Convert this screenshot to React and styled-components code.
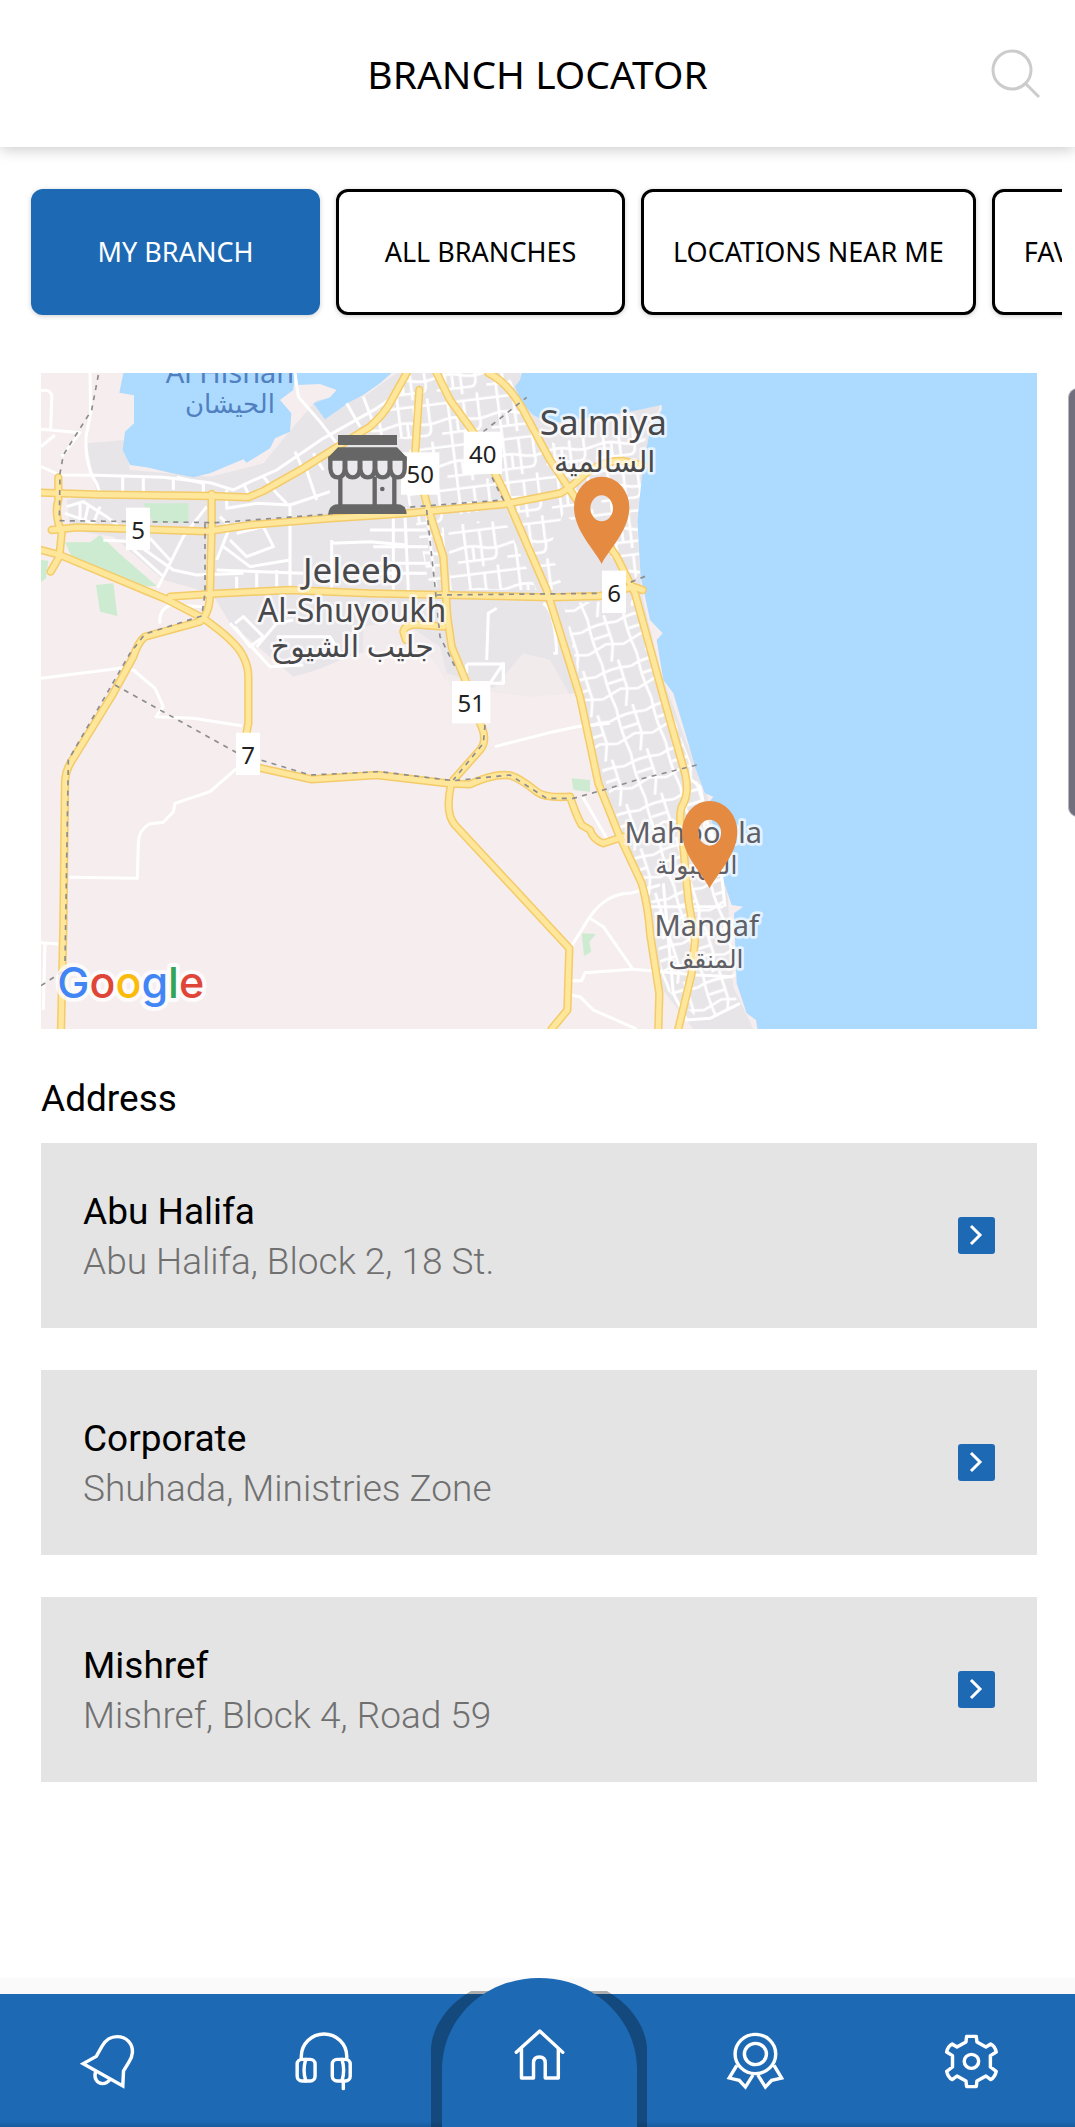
import React from "react";
import styled, { createGlobalStyle } from "styled-components";

const GlobalStyle = createGlobalStyle`
  * { box-sizing: border-box; }
  body {
    margin: 0;
    background: #fff;
    font-family: Roboto, sans-serif;
    color: #000;
  }
`;

const Page = styled.div`
  display: flex;
  flex-direction: column;
  min-height: 100vh;
  overflow: hidden;
  position: relative;
`;

const Header = styled.header`
  display: grid;
  grid-template-columns: 84px 1fr 84px;
  align-items: center;
  height: 147px;
  box-shadow: 0 2px 14px rgba(0, 0, 0, 0.22);
`;

const Title = styled.h1`
  grid-column: 2;
  margin: 0;
  font: 400 39px/60px "Noto Sans", sans-serif;
  text-align: center;
`;

const SearchButton = styled.button`
  justify-self: start;
  width: 50px;
  height: 50px;
  padding: 0;
  border: 0;
  background: none;
`;

const Tabs = styled.div`
  display: flex;
  gap: 16px;
  margin-right: 13px;
  padding: 42px 0 42px 31px;
  overflow: hidden;
`;

const Tab = styled.button`
  flex: none;
  min-width: 289px;
  height: 126px;
  padding: 0 29px;
  border: 3px solid ${(p) => (p.$active ? "#1d69b4" : "#000")};
  border-radius: 12px;
  background: ${(p) => (p.$active ? "#1d69b4" : "#fff")};
  color: ${(p) => (p.$active ? "#fff" : "#000")};
  font: 400 27px/36px "Noto Sans", sans-serif;
  box-shadow: 0 1px 5px rgba(0, 0, 0, 0.2);
`;

const Content = styled.main`
  padding: 16px 38px 48px 41px;
`;

const MapSvg = styled.svg`
  display: block;
  width: 100%;
  height: auto;
  background: #f6eeee;
`;

const SectionTitle = styled.h2`
  margin: 43px 0 18px;
  font-size: 37px;
  line-height: 53px;
  font-weight: 400;
`;

const List = styled.ul`
  display: flex;
  flex-direction: column;
  gap: 42px;
  margin: 0;
  padding: 0;
  list-style: none;
`;

const Card = styled.li`
  display: flex;
  align-items: center;
  justify-content: space-between;
  height: 185px;
  padding: 0 42px;
  background: #e4e4e4;
`;

const Details = styled.div`
  padding-top: 3px;
`;

const Name = styled.div`
  font-size: 37px;
  line-height: 50px;
`;

const Street = styled.div`
  font-size: 37px;
  line-height: 50px;
  font-weight: 300;
  color: #707070;
`;

const OpenButton = styled.button`
  display: grid;
  place-items: center;
  width: 37px;
  height: 37px;
  padding: 0;
  border: 0;
  border-radius: 3px;
  background: #1d69b4;
`;

const Nav = styled.nav`
  display: grid;
  grid-template-columns: repeat(5, 1fr);
  height: 149px;
  margin-top: auto;
  border-top: 16px solid #fafafa;
  background: linear-gradient(#1d69b4 127px, #185c9f 133px);
`;

const NavLink = styled.a`
  position: relative;
  display: grid;
  place-items: center;
  padding-bottom: 2px;
`;

const Bump = styled.svg`
  position: absolute;
  bottom: 0;
  left: 50%;
  margin-left: -107px;
`;

const NavIcon = styled.svg`
  position: relative;
  fill: none;
  stroke: #fff;
  stroke-width: 10;
`;

const ScrollThumb = styled.div`
  position: absolute;
  top: 388px;
  right: -12px;
  width: 19px;
  height: 429px;
  border: 1px solid #b5b3bb;
  border-radius: 12px;
  background: #716e7d;
`;

const branches = [
  { name: "Abu Halifa", street: "Abu Halifa, Block 2, 18 St." },
  { name: "Corporate", street: "Shuhada, Ministries Zone" },
  { name: "Mishref", street: "Mishref, Block 4, Road 59" },
];

const tabs = ["MY BRANCH", "ALL BRANCHES", "LOCATIONS NEAR ME", "FAVOURITE BRANCHES"];

const majorRoads = [
  "M33 398L215 404L545 408L655 412L700 393L820 325L920 262L1020 200Q1065 160 1085 120L1130 39",
  "M65 510L140 502L340 508L530 514L660 495L900 475L1130 460L1230 450L1420 433L1590 400Q1620 385 1650 355Q1710 300 1780 303L1840 316",
  "M85 352V420Q72 460 95 520L88 590L62 635",
  "M33 570L90 585L330 685L410 718L520 775Q620 845 640 890Q655 920 655 950V1090L642 1160Q650 1215 690 1224L845 1258L1040 1245L1260 1271L1320 1273Q1390 1240 1440 1246Q1470 1255 1520 1295Q1545 1315 1620 1310Q1640 1370 1655 1395L1680 1410Q1690 1440 1720 1450L1780 1430",
  "M545 402V500L540 700Q540 760 510 785L345 830Q325 845 310 890L250 1000L130 1195Q105 1230 105 1270L100 1700L93 2007",
  "M420 710L570 700L780 690L1020 700L1560 712L1710 708L1810 680L1838 690",
  "M1168 90L1155 290L1190 430L1240 590L1252 770L1265 860L1310 970L1350 1089Q1375 1140 1350 1170L1270 1260",
  "M1262 1280Q1245 1360 1275 1395L1618 1765L1612 1950L1565 2007",
  "M1220 39L1260 120L1340 230L1420 390L1550 690L1650 1010L1705 1270L1765 1420L1835 1570Q1855 1640 1860 1720L1888 1900L1885 2007",
  "M1375 39Q1440 70 1490 170L1560 300L1640 420L1760 590L1815 700L1870 900L1900 1010L1965 1240Q1980 1300 1955 1340Q1945 1370 1958 1440L1975 1620L1995 1740L1985 1840L1945 2007",
  "M1240 800L1180 795Q1125 790 1120 815L1128 840",
];

const minorRoads = [
  "M180 39L182 160L168 230Q165 320 200 370L210 400",
  "M33 92Q70 85 65 120L62 208M33 208L150 218L95 290",
  "M33 260L75 225M33 320L90 345L200 346L400 352L540 368L610 390L650 370L740 330L880 235L1040 145L1120 90",
  "M795 39L805 110L870 185L920 250",
  "M278 352V400M340 352V395M430 352V390M440 352L520 370V400M640 370L660 412M795 275L815 320",
  "M110 440L160 425L230 470L280 510M150 430V475M175 435L165 480M105 460L190 490L210 440",
  "M220 540L310 545L430 630L500 645L640 640M300 560L400 650L385 680L460 530L530 440M360 535L420 600",
  "M590 390V445L680 430L780 435L900 395M570 470L600 500L560 600M620 520L700 500L730 560L650 590L600 540M580 560L660 620L780 600M560 630L820 640M780 430V690M905 540V690M905 550L1020 545L1130 555M620 650V690M680 640V690M740 630V680",
  "M390 790Q385 750 420 735L520 740M615 790L640 770L700 830L660 860L615 800M600 790L720 920L820 915M740 830H900L930 880M680 860L740 790L790 780",
  "M1090 470V690M1125 470L1135 690M1020 510H1190M1030 560H1195M1030 610H1200M1030 640H1190",
  "M33 955L270 925L310 930L375 985L400 1040L378 1070L490 1075L635 1097",
  "M620 1225L540 1295L435 1330L430 1355L400 1387L358 1392Q325 1410 325 1450L322 1555L118 1552",
  "M33 1748L85 1752M45 1752L40 1950",
  "M1395 1160L1550 1120L1640 1100L1740 1090",
  "M1658 1310L1730 1435M1620 1765L1680 1670Q1730 1600 1800 1600L1890 1575",
  "M1680 1675L1720 1700L1810 1830M1620 1862H1655L1665 1838L1810 1828L2000 1845L2110 1850",
  "M1620 1905L1650 1910L1690 1950L1820 2007",
  "M1540 730Q1575 750 1580 880H1570M1380 970L1420 910V970M1370 900L1375 760L1400 745",
  "M1310 912H1420V970H1380M1310 912V940",
  "M1960 1240L2010 1280L2035 1400L2070 1500L2085 1640M1860 1640L2080 1640M1900 1570L1930 1900L1970 1980L2040 1975L2130 1930",
  "M700 350L740 400L770 430M850 280L880 330M830 330L860 420M950 130L990 200M1000 110L1030 190",
];

const rails = [
  "M205 45L185 150L100 285L90 340L88 482L340 485L560 488L900 462L1130 442L1420 420L1380 340",
  "M1360 215L1490 112",
  "M525 490V700L515 768L345 822L300 880L225 1010L115 1200L105 1810",
  "M255 975L620 1178L840 1245L1050 1235L1270 1262L1440 1245L1550 1315L1630 1315L1720 1290L1820 1260L2000 1215",
  "M1190 450L1215 680L1230 830L1280 930",
  "M1220 705L1720 700L1855 645",
  "M1365 1095L1360 1150L1270 1260",
  "M33 1877L105 1830",
];

const places = [
  { text: "Al Hishan", x: 600, y: 68, size: 87, color: "#5080bf", halo: "none" },
  { text: "الحيشان", x: 600, y: 158, size: 78, color: "#5080bf", halo: "none" },
  { text: "Salmiya", x: 1720, y: 225, size: 105 },
  { text: "السالمية", x: 1724, y: 335, size: 87 },
  { text: "Jeleeb", x: 968, y: 668, size: 105 },
  { text: "Al-Shuyoukh", x: 966, y: 787, size: 96 },
  { text: "جليب الشيوخ", x: 967, y: 892, size: 90 },
  { text: "Mahboula", x: 1990, y: 1448, size: 87, color: "#5f5f66" },
  { text: "المهبولة", x: 1999, y: 1543, size: 75, color: "#5f5f66" },
  { text: "Mangaf", x: 2030, y: 1728, size: 87, color: "#5f5f66" },
  { text: "المنقف", x: 2028, y: 1823, size: 75, color: "#5f5f66" },
];

const shields = [
  { text: "5", x: 288, y: 443, w: 72 },
  { text: "50", x: 1113, y: 277, w: 115 },
  { text: "40", x: 1301, y: 215, w: 115 },
  { text: "6", x: 1716, y: 632, w: 72 },
  { text: "51", x: 1266, y: 963, w: 115 },
  { text: "7", x: 618, y: 1118, w: 72 },
];

const PlaceText = styled.text`
  font-family: "Noto Sans", "DejaVu Sans", sans-serif;
  text-anchor: middle;
  fill: ${(p) => p.$color || "#48484a"};
  stroke: ${(p) => p.$halo || "rgba(255, 255, 255, 0.7)"};
  stroke-width: 16;
  stroke-linejoin: round;
  paint-order: stroke;
`;

const ShieldText = styled.text`
  font: 72px "Noto Sans", sans-serif;
  text-anchor: middle;
  fill: #222;
`;

const LogoText = styled.text`
  font: 500 129px Inter, sans-serif;
  stroke: rgba(255, 255, 255, 0.75);
  stroke-width: 24;
  stroke-linejoin: round;
  paint-order: stroke;
`;

const Pin = ({ x, y }) => (
  <path
    transform={`translate(${x} ${y})`}
    fill="#e58a41"
    fillRule="evenodd"
    d="M0 0C-20 -42 -83 -100 -83 -170A83 92 0 0 1 83 -170C83 -100 20 -42 0 0ZM-34 -167A34 39 0 0 0 34 -167A34 39 0 0 0 -34 -167Z"
  />
);

const Store = () => (
  <g fill="#666">
    <path d="M1034 350H1093V440H1034Z" fill="#e4e2e6" />
    <path d="M924 225H1101V255H924ZM924 262H1101L1130 292V302H895V292Z" />
    <g fill="#ebe9ed" stroke="#666" strokeWidth="13">
      {[901, 946, 991, 1036, 1081].map((x) => (
        <path key={x} d={`M${x} 296V325Q${x + 2} 352 ${x + 22} 352Q${x + 43} 352 ${x + 43} 325V296Z`} />
      ))}
      <path fill="none" d="M931 350V440M1034 350V440M1093 350V440" />
    </g>
    <circle cx="1057" cy="387" r="7" />
    <path d="M895 462Q897 433 925 433H1102Q1128 433 1130 462Z" />
  </g>
);

const BranchMap = () => (
  <MapSvg viewBox="33 39 2988 1968" role="img" aria-label="Map of branches">
    <defs>
      <pattern id="blocks" width="150" height="130" patternUnits="userSpaceOnUse" patternTransform="rotate(-7)">
        <path
          d="M0 20H150M0 72Q40 60 75 72T150 72M0 110H95M28 0V130M75 20V130M118 0V72M95 110Q125 115 118 72M50 72V110"
          fill="none"
          stroke="#fff"
          strokeWidth="8"
        />
      </pattern>
      <pattern id="lanes" width="110" height="140" patternUnits="userSpaceOnUse" patternTransform="rotate(-18)">
        <path
          d="M0 30Q50 15 110 30M0 100L60 85L110 100M30 0Q20 60 30 140M80 0V90L60 140M30 60H80"
          fill="none"
          stroke="#fff"
          strokeWidth="8"
        />
      </pattern>
    </defs>
    <path
      fill="#e8e5e9"
      d="M170 250L280 240L300 330L540 350L700 310L790 200L860 120L1000 110L1100 39H1470L1490 150L1890 135L1840 330L1820 480L1835 700L1890 930L2000 1230L2030 1300L2090 1560L2110 1880L2170 2007H1990L1890 1880L1850 1600L1760 1400L1700 1220L1640 1000L1500 1010L1260 980L1180 860L980 880L860 930L790 950L600 790L545 700L400 660L250 530L120 510L110 420L200 400Z"
    />
    <path fill="#f6eeee" d="M1250 940L1390 985L1480 880L1560 900L1640 1040H1240Z" opacity="0.6" />
    <path fill="#f6eeee" d="M1000 800L1110 780L1230 860L1262 985H1180L1000 890Z" opacity="0.7" />
    <path
      fill="url(#blocks)"
      d="M1090 90L1150 39H1430L1490 150L1570 250L1850 200L1825 480L1830 640L1800 670L1720 560L1600 460L1560 560L1600 690H1560L1440 440L1240 470L1250 680H1200L1150 450L1130 430L1140 240L1000 220Z"
    />
    <path fill="url(#blocks)" d="M1255 500L1420 470L1520 690H1260Z" />
    <path
      fill="url(#lanes)"
      d="M1600 730L1820 720L1890 960L1990 1230L2030 1330L2080 1560V1640L2110 1700L2120 1930L2020 1990L1900 1880L1870 1640L1770 1400L1700 1180L1640 920Z"
    />
    <g fill="#addaff">
      <path d="M280 39L268 98L312 106L312 190L285 215L278 270L300 315L350 322L420 338L490 352L540 340L640 298L650 308L720 265L735 235L780 215L784 160L750 120L790 90L795 39Z" />
      <path d="M800 39V75L870 72L920 90L900 112L850 130L885 178L960 125L1000 105L1050 70L1085 39Z" />
      <path d="M1475 39L1470 60L1455 80L1475 130L1510 165L1560 190L1800 155L1895 135L1895 150L1860 210L1838 330L1822 480L1832 650L1860 780L1898 820L1880 840L1900 960L1930 1000L1975 1150L1995 1220L2025 1300L2050 1310L2035 1330L2060 1450L2080 1560L2105 1635L2140 1640L2112 1660L2120 1870L2150 1960L2178 1980L2182 2007H3021V39Z" />
    </g>
    <g fill="#cdebd0">
      <path d="M340 430H475V488H370ZM1625 1255L1680 1260V1295L1630 1290Z" />
      <path d="M105 547L180 547L210 525L270 582L380 678L320 680L200 620L130 602Z" />
      <path d="M198 675L250 670L262 768L210 755ZM33 600L55 602L48 655L33 667ZM1655 1720L1698 1722L1678 1745L1684 1775L1662 1788Z" />
    </g>
    <g fill="none" stroke="#fff" strokeWidth="9" strokeLinejoin="round">
      {minorRoads.map((d) => <path key={d} d={d} />)}
    </g>
    <g fill="none" stroke="#f4cb69" strokeWidth="25" strokeLinejoin="round" strokeLinecap="round">
      {majorRoads.map((d) => <path key={d} d={d} />)}
    </g>
    <g fill="none" stroke="#fee69b" strokeWidth="16" strokeLinejoin="round" strokeLinecap="round">
      {majorRoads.map((d) => <path key={d} d={d} />)}
    </g>
    <g fill="none" stroke="#8d8d8d" strokeWidth="5" strokeDasharray="15 16">
      {rails.map((d) => <path key={d} d={d} />)}
    </g>
    {shields.map((s) => (
      <g key={s.text}>
        <rect x={s.x} y={s.y} width={s.w} height="127" fill="#fff" />
        <ShieldText x={s.x + s.w / 2} y={s.y + 93}>{s.text}</ShieldText>
      </g>
    ))}
    {places.map((p) => (
      <PlaceText key={p.text} x={p.x} y={p.y} fontSize={p.size} $color={p.color} $halo={p.halo}>{p.text}</PlaceText>
    ))}
    <Store />
    <Pin x={1715} y={612} />
    <Pin x={2039} y={1585} />
    <LogoText x="82" y="1914">
      <tspan fill="#4285f4">G</tspan>
      <tspan fill="#e04638">o</tspan>
      <tspan fill="#fbbb0d">o</tspan>
      <tspan fill="#4285f4">g</tspan>
      <tspan fill="#34a457">l</tspan>
      <tspan fill="#e04638">e</tspan>
    </LogoText>
  </MapSvg>
);

const icons = {
  Notifications: (
    <>
      <path d="M18 107L56 85L73 54C85 33 100 26 116 26C145 26 162 48 161 73C160 90 152 100 148 107L135 129L133 174Z" />
      <path d="M54 131C48 150 58 167 74 167C86 167 92 160 97 153" />
    </>
  ),
  Support: (
    <>
      <path d="M27 92V85A66 67 0 0 1 159 85V92" />
      <rect x="15" y="94" width="52" height="65" rx="14" />
      <rect x="117" y="94" width="52" height="65" rx="14" />
      <path d="M40 94Q30 127 40 159M145 94Q155 127 145 159M149 160V182" strokeLinecap="round" />
    </>
  ),
  Home: (
    <path d="M27 73L95 9L162 73M42 62V150H77V105Q77 87 94 87Q111 87 111 105V150H149V62" strokeLinecap="round" strokeLinejoin="round" />
  ),
  Rewards: (
    <>
      <circle cx="97" cy="78" r="59" />
      <circle cx="97" cy="78" r="32" />
      <path d="M43 112L21 150L50 157L68 177L90 141M151 112L173 150L144 157L126 177L104 141" />
    </>
  ),
  Settings: (
    <>
      <path
        d="M84 42L86 25H114L116 42L142 57L156 48Q168 54 172 72L155 83V117L172 130Q168 148 156 155L142 144L116 159L114 176H86L84 159L58 144L44 155Q32 148 28 130L45 117V83L28 72Q32 54 44 48L58 57Z"
        strokeLinejoin="round"
      />
      <circle cx="100" cy="100" r="21" />
    </>
  ),
};

const App = () => {
  return (
    <>
      <GlobalStyle />
      <Page>
        <Header>
          <Title>BRANCH LOCATOR</Title>
          <SearchButton aria-label="Search">
            <svg width="50" height="50" viewBox="0 0 50 50" fill="none" stroke="#ccc" strokeWidth="3">
              <circle cx="21" cy="21" r="19" />
              <path d="M34 34L48 48" />
            </svg>
          </SearchButton>
        </Header>
        <Tabs>
          {tabs.map((tab, i) => (
            <Tab key={tab} $active={i === 0}>{tab}</Tab>
          ))}
        </Tabs>
        <Content>
          <BranchMap />
          <SectionTitle>Address</SectionTitle>
          <List>
            {branches.map((branch) => (
              <Card key={branch.name}>
                <Details>
                  <Name>{branch.name}</Name>
                  <Street>{branch.street}</Street>
                </Details>
                <OpenButton aria-label={`Open ${branch.name}`}>
                  <svg width="37" height="37" viewBox="0 0 37 37" fill="none" stroke="#fff" strokeWidth="3">
                    <path d="M13 9L22 18L13 27" />
                  </svg>
                </OpenButton>
              </Card>
            ))}
          </List>
        </Content>
        <Nav>
          {Object.keys(icons).map((name) => (
            <NavLink key={name} href="#" aria-label={name}>
              {name === "Home" && (
                <Bump width="216" height="149" viewBox="0 0 216 149">
                  <path d="M0 149V72C0 52 14 28 40 13H176C202 28 216 52 216 72V149Z" fill="#000" opacity="0.3" />
                  <path d="M11 149V92C11 40 54 0 108 0C162 0 206 40 206 92V149Z" fill="#1d69b4" />
                </Bump>
              )}
              <NavIcon width="62" height="63" viewBox="0 0 180 189" preserveAspectRatio="none">
                {icons[name]}
              </NavIcon>
            </NavLink>
          ))}
        </Nav>
        <ScrollThumb />
      </Page>
    </>
  );
};

export default App;
